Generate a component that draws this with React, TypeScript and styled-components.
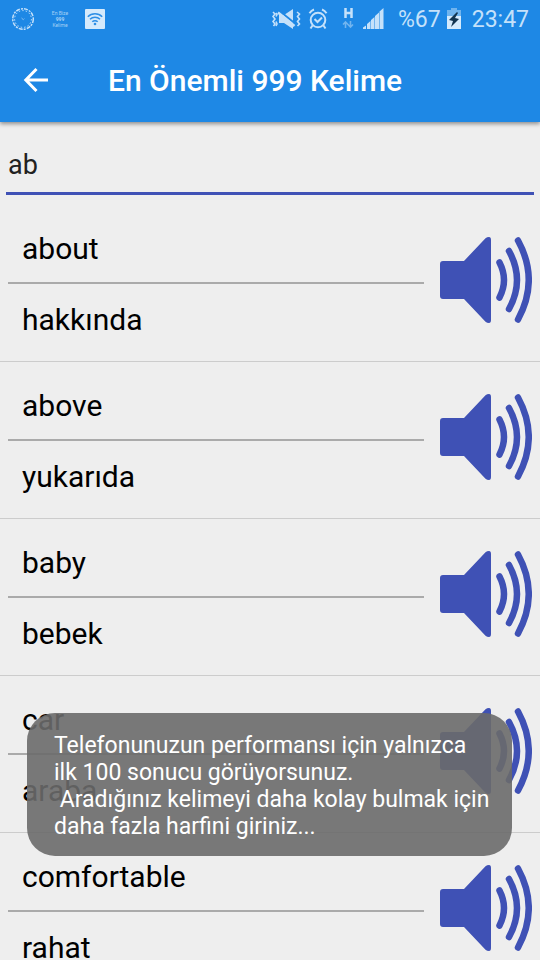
import React, { useState } from "react";
import styled, { createGlobalStyle } from "styled-components";

const GlobalStyle = createGlobalStyle`
  * { box-sizing: border-box; }
  body {
    margin: 0;
    background: #eeeeee;
    font-family: Roboto, "Noto Sans", sans-serif;
  }
`;

const Screen = styled.div`
  position: relative;
  display: flex;
  flex-direction: column;
  height: 100vh;
  overflow: hidden;
  background: #eeeeee;
`;

const Header = styled.header`
  flex: none;
  background: #1e88e5;
  color: #ffffff;
  box-shadow: 0 2px 4px rgba(0, 0, 0, 0.4);
`;

const StatusBar = styled.div`
  display: flex;
  align-items: center;
  justify-content: space-between;
  height: 38px;
  padding: 0 11px;
  color: #c5e1fa;
`;

const StatusGroup = styled.div<{ $gap: number }>`
  display: flex;
  align-items: center;
  gap: ${(p) => p.$gap}px;

  svg { display: block; }
`;

const StatusText = styled.span`
  padding-top: 2px;
  font-size: 23px;
  line-height: 28px;
`;

const TitleBar = styled.div`
  display: flex;
  align-items: center;
  height: 84px;
  padding: 0 18px;
  gap: 54px;
`;

const BackButton = styled.button`
  display: flex;
  padding: 0;
  border: 0;
  background: none;
  color: inherit;
  cursor: pointer;
`;

const Title = styled.h1`
  margin: 0;
  padding-top: 2px;
  font-size: 30px;
  line-height: 36px;
  font-weight: 500;
`;

const SearchField = styled.input`
  flex: none;
  height: 60px;
  margin: 13px 6px 10px;
  padding: 2px 2px 0;
  border: 0;
  border-bottom: 3px solid #3f51b5;
  border-radius: 0;
  outline: none;
  background: transparent;
  color: #212121;
  font-family: inherit;
  font-size: 27px;
`;

const WordList = styled.ul`
  flex: none;
  margin: 0;
  padding: 0;
  list-style: none;
`;

const WordRow = styled.li`
  display: flex;
  align-items: flex-start;
  gap: 16px;
  padding: 8px;
  border-bottom: 1px solid #cccccc;
`;

const WordPair = styled.div`
  flex: 1;
  min-width: 0;
`;

const Word = styled.div`
  padding: 18px 14px 15px;
  font-size: 30px;
  line-height: 36px;
  color: #000000;
`;

const Source = styled(Word)`
  border-bottom: 2px solid #aaaaaa;
`;

const SpeakButton = styled.button`
  flex: none;
  display: flex;
  margin-top: 24px;
  padding: 0;
  border: 0;
  background: none;
  color: #3f51b5;
  cursor: pointer;
`;

const Toast = styled.div`
  position: absolute;
  left: 27px;
  right: 28px;
  bottom: 104px;
  padding: 19px 20px 16px 27px;
  border-radius: 28px;
  background: rgba(106, 106, 106, 0.9);
  color: #ffffff;
  font-size: 23px;
  line-height: 27px;
`;

const ToastLine = styled.p`
  margin: 0;
  white-space: pre-wrap;
`;

const DialIcon = () => (
  <svg width="24" height="24" viewBox="0 0 24 24" fill="none" stroke="currentColor">
    <circle cx="12" cy="12" r="10.3" strokeWidth="1.5" strokeDasharray="4 1.2 2 1" />
    <circle cx="12" cy="12" r="8.4" strokeWidth="1" strokeDasharray="1.5 2" />
    <path d="M10.5 11l1.8 1.6 1-1" opacity="0.6" />
  </svg>
);

const TinyLabel = styled.span`
  display: flex;
  flex-direction: column;
  align-items: center;
  width: 20px;
  font-size: 5px;
  line-height: 6px;
  white-space: nowrap;
  opacity: 0.8;
`;

const WifiIcon = () => (
  <svg width="20" height="20" viewBox="0 0 20 20">
    <rect width="20" height="20" rx="1" fill="#d5eafc" />
    <g fill="none" stroke="#2e8fe6" strokeWidth="1.5">
      <path d="M2.8 7.7a10 10 0 0 1 14.4 0" />
      <path d="M5 10.3a7 7 0 0 1 10 0" />
      <path d="M7.3 12.8a3.8 3.8 0 0 1 5.4 0" />
    </g>
    <circle cx="10" cy="15" r="1.3" fill="#2e8fe6" />
  </svg>
);

const MuteIcon = () => (
  <svg width="29" height="22" viewBox="0 0 29 22">
    <path d="M7 7h5l9-6v20l-9-6H7z" fill="currentColor" />
    <path d="M7 2.5L23 15.5" stroke="#1e88e5" strokeWidth="2" />
    <path d="M6 4.5L22.5 18" stroke="currentColor" strokeWidth="2.5" />
    <path
      d="M1 4l2 2-2 2.5 2 2.5-2 2.5 2 2.5-1.500 2M4 5l1 1.5-1 2M4 13.5l1 2.5-1 2M25 4l2.5 2-2 2.5 2 2.5-2 2.5 2 2.5-2 2"
      fill="none" stroke="currentColor" strokeWidth="1.6"
    />
  </svg>
);

const AlarmIcon = () => (
  <svg width="20" height="22" viewBox="0 0 20 22" fill="none" stroke="currentColor" strokeWidth="2">
    <circle cx="10" cy="12" r="7.3" />
    <path d="M6.5 11l3 3 4.5-4.5M1.5 5.2A9 9 0 0 1 6 1.5M18.5 5.2A9 9 0 0 0 14 1.5M4.5 17.5l-2 3M15.5 17.5l2 3" />
  </svg>
);

const NetworkIcon = () => (
  <svg width="12" height="22" viewBox="0 0 12 22" fill="none" stroke="currentColor">
    <path d="M3.5 0v10M9.5 0v10M3.5 5h6" strokeWidth="2.5" />
    <path d="M3.5 20v-6M1 16.5L3.5 14 6 16.5M8.5 13v6M6 16.5L8.5 19 11 16.5" strokeWidth="1.6" opacity="0.5" />
  </svg>
);

const SignalIcon = () => (
  <svg width="22" height="22" viewBox="0 0 22 22" fill="currentColor">
    <path d="M1 21v-1.5l3-2V21zM5 21v-5l3.500-3v8zM9 21v-9l3.500-3v12zM13 21V8l4-3.500V21zM17.5 21V3.5L21.5 0v21z" />
  </svg>
);

const BatteryIcon = () => (
  <svg width="14" height="22" viewBox="0 0 14 22">
    <path d="M4 0h6v2h4v6H0V2h4z" fill="#70b4ee" />
    <path d="M0 8h14v13H0z" fill="#d5eafc" />
    <path d="M10 4L2 12l4 1-2 6 8-8-4-1 3-5z" fill="#123450" />
  </svg>
);

const BackIcon = () => (
  <svg width="36" height="36" viewBox="0 0 36 36" fill="none" stroke="currentColor" strokeWidth="3">
    <path d="M30 18H8M18.5 7L7.8 18l10.7 11" />
  </svg>
);

const SpeakerIcon = () => (
  <svg width="92" height="86" viewBox="0 0 92 86">
    <path
      d="M3 24H24L45.5 1.2Q47 0 49 0Q51 0 51 3V83Q51 86 49 86Q47 86 45.5 84.8L24 62H3Q0 62 0 59V27Q0 24 3 24Z"
      fill="currentColor"
    />
    <g fill="none" stroke="currentColor" strokeWidth="6.5" strokeLinecap="round">
      <path d="M59.5 25.500Q68.5 43 59.5 60.5" />
      <path d="M69 14Q85 43 69 72" />
      <path d="M78 3.5Q99.5 43 78 82.5" />
    </g>
  </svg>
);

const words = [
  { en: "about", tr: "hakkında" },
  { en: "above", tr: "yukarıda" },
  { en: "baby", tr: "bebek" },
  { en: "car", tr: "araba" },
  { en: "comfortable", tr: "rahat" },
];

export default function App() {
  const [query, setQuery] = useState("ab");

  return (
    <Screen>
      <GlobalStyle />
      <Header>
        <StatusBar>
          <StatusGroup $gap={15}>
            <DialIcon />
            <TinyLabel>
              <span>En Bize</span>
              <strong>999</strong>
              <span>Kelime</span>
            </TinyLabel>
            <WifiIcon />
          </StatusGroup>
          <StatusGroup $gap={14}>
            <StatusGroup $gap={7}>
              <MuteIcon />
              <AlarmIcon />
            </StatusGroup>
            <StatusGroup $gap={8}>
              <NetworkIcon />
              <SignalIcon />
            </StatusGroup>
            <StatusGroup $gap={11}>
              <StatusGroup $gap={6}>
                <StatusText>%67</StatusText>
                <BatteryIcon />
              </StatusGroup>
              <StatusText>23:47</StatusText>
            </StatusGroup>
          </StatusGroup>
        </StatusBar>
        <TitleBar>
          <BackButton aria-label="Geri">
            <BackIcon />
          </BackButton>
          <Title>En Önemli 999 Kelime</Title>
        </TitleBar>
      </Header>
      <SearchField
        type="text"
        aria-label="Kelime ara"
        value={query}
        onChange={(e) => setQuery(e.target.value)}
      />
      <WordList>
        {words.map((word) => (
          <WordRow key={word.en}>
            <WordPair>
              <Source lang="en">{word.en}</Source>
              <Word lang="tr">{word.tr}</Word>
            </WordPair>
            <SpeakButton aria-label={`${word.en} dinle`}>
              <SpeakerIcon />
            </SpeakButton>
          </WordRow>
        ))}
      </WordList>
      <Toast role="status">
        <ToastLine>Telefonunuzun performansı için yalnızca ilk 100 sonucu görüyorsunuz.</ToastLine>
        <ToastLine>{" Aradığınız kelimeyi daha kolay bulmak için daha fazla harfini giriniz..."}</ToastLine>
      </Toast>
    </Screen>
  );
}
